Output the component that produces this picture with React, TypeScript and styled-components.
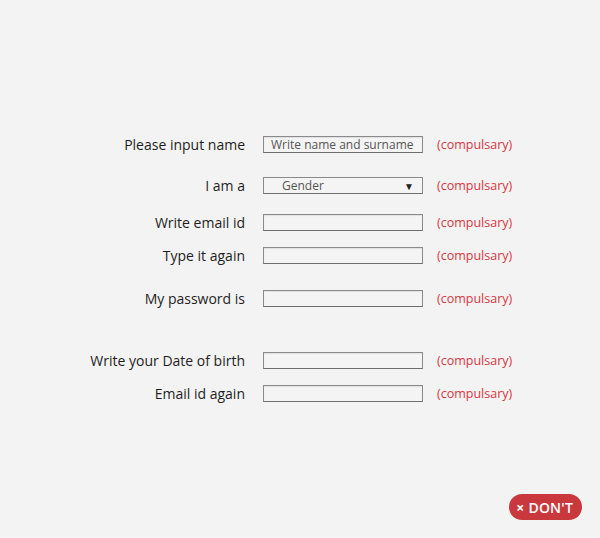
import React from "react";
import styled, { createGlobalStyle } from "styled-components";

const GlobalStyle = createGlobalStyle`
  html, body {
    margin: 0;
    padding: 0;
    background: #f3f3f3;
  }
  body {
    font-family: "Open Sans", "Liberation Sans", sans-serif;
    color: #222;
  }
`;

type Field = {
  label: string;
  gap: number;
  kind?: "text" | "select";
  placeholder?: string;
};

const fields: Field[] = [
  { label: "Please input name", gap: 136, placeholder: "Write name and surname" },
  { label: "I am a", gap: 24, kind: "select" },
  { label: "Write email id", gap: 20 },
  { label: "Type it again", gap: 16 },
  { label: "My password is", gap: 26 },
  { label: "Write your Date of birth", gap: 45 },
  { label: "Email id again", gap: 16 },
];

export default function App() {
  return (
    <Page>
      <GlobalStyle />
      <Form>
        {fields.map((f) => (
          <Row key={f.label} $gap={f.gap}>
            <Label>{f.label}</Label>
            {f.kind === "select" ? (
              <Select>
                <span>Gender</span>
                <Caret>▼</Caret>
              </Select>
            ) : (
              <Input placeholder={f.placeholder} />
            )}
            <Required>(compulsary)</Required>
          </Row>
        ))}
      </Form>
      <Footer>
        <DontButton>
          <Cross>×</Cross> DON'T
        </DontButton>
      </Footer>
    </Page>
  );
}

const Page = styled.div`
  min-height: 538px;
  display: flex;
  flex-direction: column;
`;

const Form = styled.div`
  display: flex;
  flex-direction: column;
`;

const Row = styled.div<{ $gap: number }>`
  display: grid;
  grid-template-columns: 245px 160px auto;
  column-gap: 18px;
  align-items: center;
  height: 17px;
  margin-top: ${({ $gap }) => $gap}px;

  & > :last-child {
    margin-left: -4px;
  }
`;

const Label = styled.div`
  text-align: right;
  font-size: 14px;
  line-height: 17px;
  color: #1e1e1e;
  white-space: nowrap;
`;

const Input = styled.input`
  box-sizing: border-box;
  width: 160px;
  height: 17px;
  margin: 0;
  padding: 0 7px;
  border: 1px solid #8a8a8a;
  border-bottom-color: #6e6e6e;
  border-radius: 0;
  background: #f4f4f4;
  box-shadow: inset 0 1px 1px rgba(0, 0, 0, 0.08);
  font-family: inherit;
  font-size: 12px;
  color: #444;
  outline: none;

  &::placeholder {
    color: #555;
  }
`;

const Select = styled.div`
  box-sizing: border-box;
  width: 160px;
  height: 17px;
  display: flex;
  align-items: center;
  justify-content: space-between;
  padding: 0 8px 0 18px;
  border: 1px solid #8a8a8a;
  border-bottom-color: #6e6e6e;
  background: #f4f4f4;
  font-size: 12px;
  color: #555;
`;

const Caret = styled.span`
  font-size: 10px;
  color: #222;
`;

const Required = styled.div`
  font-size: 12.5px;
  line-height: 17px;
  color: #d9373f;
  white-space: nowrap;
`;

const Footer = styled.div`
  margin-top: auto;
  display: flex;
  justify-content: flex-end;
  padding: 0 18px 18px 0;
`;

const DontButton = styled.div`
  display: flex;
  align-items: center;
  gap: 4px;
  height: 26px;
  padding: 0 9px 0 7px;
  border-radius: 13px;
  background: #c8383d;
  color: #fff;
  font-size: 14px;
  font-weight: 600;
  letter-spacing: 0.2px;
`;

const Cross = styled.span`
  font-size: 14px;
  font-weight: 700;
`;
